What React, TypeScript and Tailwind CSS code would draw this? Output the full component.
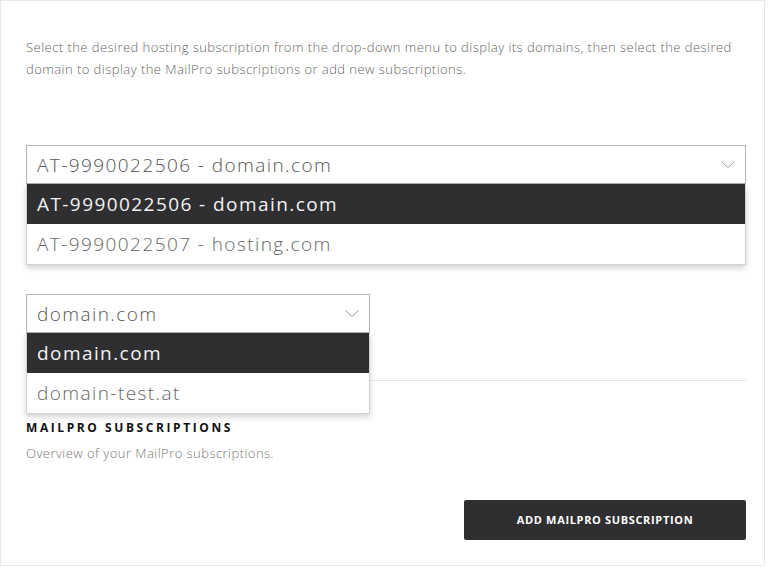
const hostings = ['AT-9990022506 - domain.com', 'AT-9990022507 - hosting.com'];
const domains = ['domain.com', 'domain-test.at'];

function Chevron() {
  return (
    <svg width="14" height="7" viewBox="0 0 14 7" fill="none" className="shrink-0">
      <polyline points="0.5,0.5 7,6.5 13.5,0.5" stroke="#9a9a9a" strokeWidth="1" />
    </svg>
  );
}

function Select({ value, options, width }: { value: string; options: string[]; width: string }) {
  return (
    <div className={`relative ${width}`}>
      <div className="h-[39px] border border-[#b3b3b3] bg-white flex items-center justify-between pl-[10px] pr-[10px] text-[19px] tracking-[0.075em] font-light text-[#555]">
        <span className="pt-[2px]">{value}</span>
        <Chevron />
      </div>
      {/* open list */}
      <ul className="absolute left-0 right-0 top-full z-10 bg-white border-x border-b border-[#d2d2d2] shadow-[0_3px_6px_rgba(0,0,0,0.18)]">
        {options.map((o) => (
          <li
            key={o}
            className={
              o === value
                ? 'h-10 flex items-center pl-[10px] text-[19px] tracking-[0.075em] bg-[#2f2f31] text-[#f2f2f2]'
                : 'h-10 flex items-center pl-[10px] text-[19px] tracking-[0.075em] font-light text-[#666]'
            }
          >
            {o}
          </li>
        ))}
      </ul>
    </div>
  );
}

export default function App() {
  return (
    <div className="w-[765px] h-[566px] border border-[#e8e8e8] bg-white font-['Open_Sans',sans-serif]">
      <div className="pl-[25px] pr-[18px] pt-[35px]">
        <p className="text-[13px] leading-[22px] tracking-[0.035em] font-light text-[#666]">
          Select the desired hosting subscription from the drop-down menu to display its domains, then select the desired
          domain to display the MailPro subscriptions or add new subscriptions.
        </p>

        <div className="mt-[65px]">
          <Select value={hostings[0]} options={hostings} width="w-full" />
        </div>

        <div className="mt-[110px]">
          <Select value={domains[0]} options={domains} width="w-[344px]" />
        </div>

        <div className="mt-[47px] border-t border-[#e5e5e5]" />

        <h2 className="mt-[39px] text-[12px] leading-4 font-bold tracking-[0.215em] text-[#111]">MAILPRO SUBSCRIPTIONS</h2>
        <p className="mt-[9px] text-[13px] leading-4 tracking-[0.035em] font-light text-[#777]">Overview of your MailPro subscriptions.</p>

        <div className="mt-[39px] flex justify-end">
          <button className="w-[282px] h-10 rounded-[2px] bg-[#2f2f31] text-white text-[11px] font-bold tracking-[0.06em]">
            ADD MAILPRO SUBSCRIPTION
          </button>
        </div>
      </div>
    </div>
  );
}
